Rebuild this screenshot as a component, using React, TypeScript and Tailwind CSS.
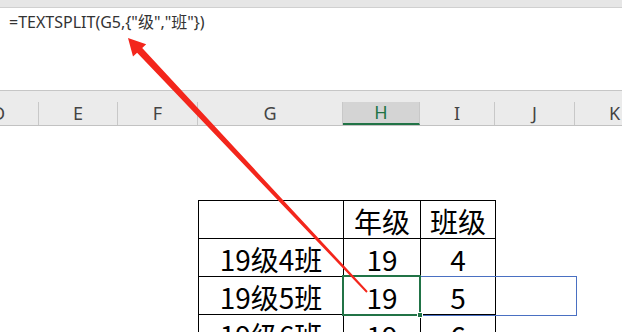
import React from "react";

const cols = [
  { l: "D", w: "w-[80px]" },
  { l: "E", w: "w-[79px]" },
  { l: "F", w: "w-[80px]" },
  { l: "G", w: "w-[145px]" },
  { l: "H", w: "w-[77px]", sel: true },
  { l: "I", w: "w-[75px]" },
  { l: "J", w: "w-[80px]" },
  { l: "K", w: "w-[80px]" },
];

const rows = [
  ["", "年级", "班级"],
  ["19级4班", "19", "4"],
  ["19级5班", "19", "5"],
  ["19级6班", "19", "6"],
];

const formula = '=TEXTSPLIT(G5,{"级","班"})';

export default function App() {
  return (
    <div
      className="relative w-[622px] h-[332px] overflow-hidden bg-white"
      style={{ fontFamily: '"Noto Sans", "Noto Sans CJK SC", sans-serif' }}
    >
      <div className="h-[8px] bg-[#e6e6e6] border-b border-[#d0d0d0]" />
      <div className="h-[82px] bg-white pl-[9px] pt-[4px] text-[16px] leading-[20px] text-[#333]">
        {formula}
      </div>
      <div className="h-[36px] bg-[#ebebeb] border-t border-[#c6c6c6] pt-[11px]">
        <div className="flex h-[24px] ml-[-41px] border-b border-[#c2c2c2]">
          {cols.map((c) => (
            <div
              key={c.l}
              className={
                c.sel
                  ? `${c.w} shrink-0 flex items-center justify-center border-r border-[#c8c8c8] border-b-2 border-b-[#217346] bg-[#d4d4d4] text-[#217346] text-[18px]`
                  : `${c.w} shrink-0 flex items-center justify-center border-r border-[#c8c8c8] text-[#444] text-[18px]`
              }
            >
              {c.l}
            </div>
          ))}
        </div>
      </div>
      <div className="pl-[198px] pt-[74px]">
        <div
          className="grid grid-cols-[144px_76px_74px] gap-px bg-black p-px w-[298px] text-black text-[28px]"
          style={{ fontFamily: '"Noto Sans CJK SC", sans-serif' }}
        >
          {rows.flat().map((t, i) => (
            <div
              key={i}
              className="bg-white h-[37px] flex items-center justify-center leading-[37px] pt-[4px]"
            >
              {t}
            </div>
          ))}
        </div>
      </div>
      <div className="absolute left-[420px] top-[276px] w-[157px] h-[40px] border border-[#4a70c2]" />
      <div className="absolute left-[342px] top-[275px] w-[79px] h-[41px] border-2 border-[#217346]" />
      <div className="absolute left-[417px] top-[312px] w-[6px] h-[6px] bg-[#217346] border border-white" />
      <svg
        className="absolute left-0 top-0"
        width="622"
        height="332"
        viewBox="0 0 622 332"
      >
        <polygon
          fill="#f3261c"
          points="128,38 146.2,44.2 142.2,48 367.7,291.3 366.3,292.7 137.1,52.8 133,56.6"
        />
      </svg>
    </div>
  );
}
